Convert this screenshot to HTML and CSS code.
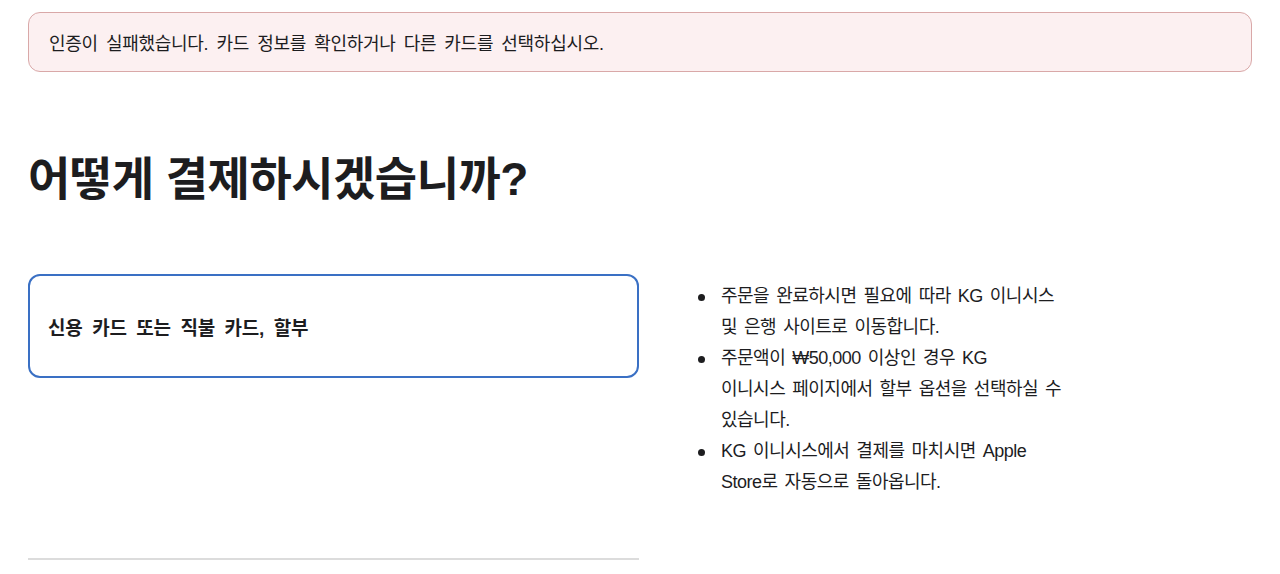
FILE: index.html
```html
<!DOCTYPE html>
<html lang="ko">
<head>
<meta charset="utf-8">
<link rel="stylesheet" href="styles.css">
</head>
<body>
<div class="page">
  <div class="alert">인증이 실패했습니다. 카드 정보를 확인하거나 다른 카드를 선택하십시오.</div>
  <h1 class="title">어떻게 결제하시겠습니까?</h1>
  <div class="content">
    <div class="left">
      <div class="option">신용 카드 또는 직불 카드, 할부</div>
      <div class="divider"></div>
    </div>
    <div class="right">
      <ul class="notes">
        <li>주문을 완료하시면 필요에 따라 KG 이니시스<br>및 은행 사이트로 이동합니다.</li>
        <li>주문액이 ₩50,000 이상인 경우 KG<br>이니시스 페이지에서 할부 옵션을 선택하실 수<br>있습니다.</li>
        <li>KG 이니시스에서 결제를 마치시면 Apple<br>Store로 자동으로 돌아옵니다.</li>
      </ul>
    </div>
  </div>
</div>
</body>
</html>
```

FILE: styles.css
```css
* { box-sizing: border-box; }
html, body { margin: 0; padding: 0; background: #fff; }
body {
  font-family: "Liberation Sans", "Noto Sans CJK KR", sans-serif;
  color: #1d1d1f;
}
.page { padding: 12px 28px 0; }
.alert {
  height: 60px;
  display: flex;
  align-items: center;
  padding: 0 20px;
  background: #fcf0f1;
  border: 1px solid #d9a8a8;
  border-radius: 12px;
  font-size: 18px;
  letter-spacing: -0.3px;
  word-spacing: 3.5px;
}
.title {
  margin: 78px 0 0;
  font-size: 46px;
  line-height: 58px;
  font-weight: 700;
  letter-spacing: -0.5px;
}
.content {
  display: grid;
  grid-template-columns: 611px 1fr;
  column-gap: 41px;
  margin-top: 66px;
}
.option {
  height: 104px;
  border: 2px solid #3a70c4;
  border-radius: 12px;
  display: flex;
  align-items: center;
  padding: 0 18px;
  font-size: 19px;
  font-weight: 700;
  letter-spacing: -0.2px;
  word-spacing: 4.5px;
}
.divider {
  margin-top: 180px;
  height: 2px;
  background: #dcdcdc;
}
.notes {
  margin: 7px 0 0;
  padding-left: 41px;
  width: 440px;
  list-style: none;
  font-size: 18px;
  line-height: 31px;
  letter-spacing: -0.5px;
  word-spacing: 2.5px;
  white-space: nowrap;
}
.notes li { position: relative; }
.notes li::before {
  content: "";
  position: absolute;
  left: -23px;
  top: 13px;
  width: 7px;
  height: 7px;
  border-radius: 50%;
  background: #1d1d1f;
}
```
